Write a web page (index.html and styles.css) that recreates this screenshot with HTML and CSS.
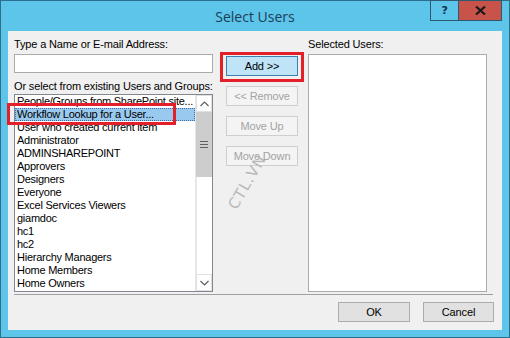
FILE: index.html
```html
<!DOCTYPE html>
<html>
<head>
<meta charset="utf-8">
<link rel="stylesheet" href="styles.css">
</head>
<body>
<div class="window">
  <div class="titlebar">
    <div class="title">Select Users</div>
    <div class="tbtns">
      <div class="tb help">?</div>
      <div class="tb close">
        <svg width="11" height="9" viewBox="0 0 11 9"><path d="M1 0.5 L10 8.5 M10 0.5 L1 8.5" stroke="#1a1a1a" stroke-width="2.2"/></svg>
      </div>
    </div>
  </div>
  <div class="client">
    <div class="main">
      <div class="col left">
        <div class="label">Type a Name or E-mail Address:</div>
        <div class="input"></div>
        <div class="label lbl2">Or select from existing Users and Groups:</div>
        <div class="list">
          <div class="items">
            <div class="item">People/Groups from SharePoint site...</div>
            <div class="item sel">Workflow Lookup for a User...</div>
            <div class="item">User who created current item</div>
            <div class="item">Administrator</div>
            <div class="item">ADMINSHAREPOINT</div>
            <div class="item">Approvers</div>
            <div class="item">Designers</div>
            <div class="item">Everyone</div>
            <div class="item">Excel Services Viewers</div>
            <div class="item">giamdoc</div>
            <div class="item">hc1</div>
            <div class="item">hc2</div>
            <div class="item">Hierarchy Managers</div>
            <div class="item">Home Members</div>
            <div class="item">Home Owners</div>
          </div>
          <div class="scroll">
            <div class="arrow">
              <svg width="9" height="6" viewBox="0 0 9 6"><path d="M0.5 5 L4.5 1 L8.5 5" fill="none" stroke="#606060" stroke-width="1.2"/></svg>
            </div>
            <div class="thumb">
              <svg width="8" height="7" viewBox="0 0 8 7"><path d="M0 0.5 H8 M0 3.5 H8 M0 6.5 H8" stroke="#606060" stroke-width="1"/></svg>
            </div>
            <div class="track"></div>
            <div class="arrow">
              <svg width="9" height="6" viewBox="0 0 9 6"><path d="M0.5 1 L4.5 5 L8.5 1" fill="none" stroke="#606060" stroke-width="1.2"/></svg>
            </div>
          </div>
        </div>
      </div>
      <div class="col mid">
        <div class="btn add">Add &gt;&gt;</div>
        <div class="btn dis">&lt;&lt; Remove</div>
        <div class="btn dis">Move Up</div>
        <div class="btn dis">Move Down</div>
      </div>
      <div class="col right">
        <div class="label">Selected Users:</div>
        <div class="selbox"></div>
      </div>
    </div>
    <div class="sep"></div>
    <div class="footer">
      <div class="btn ok">OK</div>
      <div class="btn cancel">Cancel</div>
    </div>
  </div>
  <div class="hl hl-item"></div>
  <div class="hl hl-add"></div>
  <div class="watermark">CTL.VN</div>
</div>
</body>
</html>
```

FILE: styles.css
```css
* { box-sizing: border-box; }
html, body { margin: 0; padding: 0; }
body {
  width: 510px;
  height: 338px;
  overflow: hidden;
  font-family: "Liberation Sans", Arial, sans-serif;
  font-size: 11px;
  letter-spacing: -0.15px;
  color: #000;
}
.window {
  position: relative;
  width: 510px;
  height: 338px;
  background: #5cc5e9;
  border: 1px solid #2d6e8e;
  display: flex;
  flex-direction: column;
  padding: 0 7px 7px 7px;
}
.titlebar {
  height: 30px;
  position: relative;
  display: flex;
  justify-content: center;
  align-items: center;
}
.title {
  font-family: "Open Sans", "Noto Sans", sans-serif;
  font-size: 14px;
  letter-spacing: 0;
  color: #1c3d58;
}
.tbtns {
  position: absolute;
  right: 0;
  top: -1px;
  display: flex;
}
.tb {
  height: 21px;
  display: flex;
  align-items: center;
  justify-content: center;
  border: 1px solid #2c5a73;
}
.help {
  width: 28px;
  font-family: "DejaVu Sans", sans-serif;
  font-weight: bold;
  font-size: 11px;
  color: #13304a;
  border-right: none;
}
.close {
  width: 44px;
  background: #c7534a;
}
.client {
  flex: 1;
  background: #f0f0f0;
  display: flex;
  flex-direction: column;
  padding: 7px 0 0 6px;
}
.main {
  display: flex;
}
.col { display: flex; flex-direction: column; }
.left { width: 199px; }
.label { height: 13px; line-height: 13px; white-space: nowrap; }
.input {
  margin-top: 3px;
  height: 19px;
  background: #fff;
  border: 1px solid #ababab;
}
.lbl2 { margin-top: 7px; }
.list {
  margin-top: 1px;
  height: 198px;
  background: #fff;
  border: 1px solid #828790;
  display: flex;
}
.items {
  flex: 1;
  padding: 0;
  overflow: hidden;
  letter-spacing: -0.25px;
}
.item {
  height: 13px;
  line-height: 13px;
  padding-left: 2px;
  white-space: nowrap;
}
.item.sel {
  background: #99c9ef;
  outline: 1px dotted #3a6fa0;
  outline-offset: -1px;
}
.scroll {
  width: 17px;
  border-left: 1px solid #e6e6e6;
  background: #f0f0f0;
  display: flex;
  flex-direction: column;
}
.arrow {
  height: 17px;
  display: flex;
  align-items: center;
  justify-content: center;
  background: #fff;
  border: 1px solid #e0e0e0;
}
.thumb {
  height: 65px;
  background: #cdcdcd;
  display: flex;
  align-items: center;
  justify-content: center;
}
.track { flex: 1; background: #fff; border-left: 1px solid #eaeaea; }
.mid {
  width: 72px;
  margin-left: 13px;
  padding-top: 18px;
  gap: 10px;
}
.btn {
  height: 20px;
  display: flex;
  align-items: center;
  justify-content: center;
  border: 1px solid #adadad;
  background: #e1e1e1;
  white-space: nowrap;
}
.btn.add {
  background: #bfe4f8;
  border-color: #3c7fb1;
}
.btn.dis {
  background: #f4f4f4;
  border-color: #cfcfcf;
  color: #a3a3a3;
}
.right {
  width: 179px;
  margin-left: 10px;
}
.selbox {
  margin-top: 3px;
  height: 238px;
  background: #fff;
  border: 1px solid #ababab;
}
.sep {
  margin-top: 2px;
  margin-right: 9px;
  height: 1px;
  background: #a0a0a0;
}
.footer {
  display: flex;
  justify-content: flex-end;
  gap: 13px;
  margin-top: 7px;
  padding-right: 8px;
}
.ok { width: 72px; }
.cancel { width: 71px; }
.hl {
  position: absolute;
  border: 3px solid #e3202a;
}
.hl-item {
  left: 6px;
  top: 102px;
  width: 169px;
  height: 22px;
}
.hl-add {
  left: 219px;
  top: 51px;
  width: 84px;
  height: 30px;
}
.watermark {
  position: absolute;
  left: 216px;
  top: 172px;
  font-family: "DejaVu Sans", sans-serif;
  font-size: 15px;
  color: #b8b8b8;
  transform: rotate(-60deg);
  letter-spacing: 1px;
}
```
